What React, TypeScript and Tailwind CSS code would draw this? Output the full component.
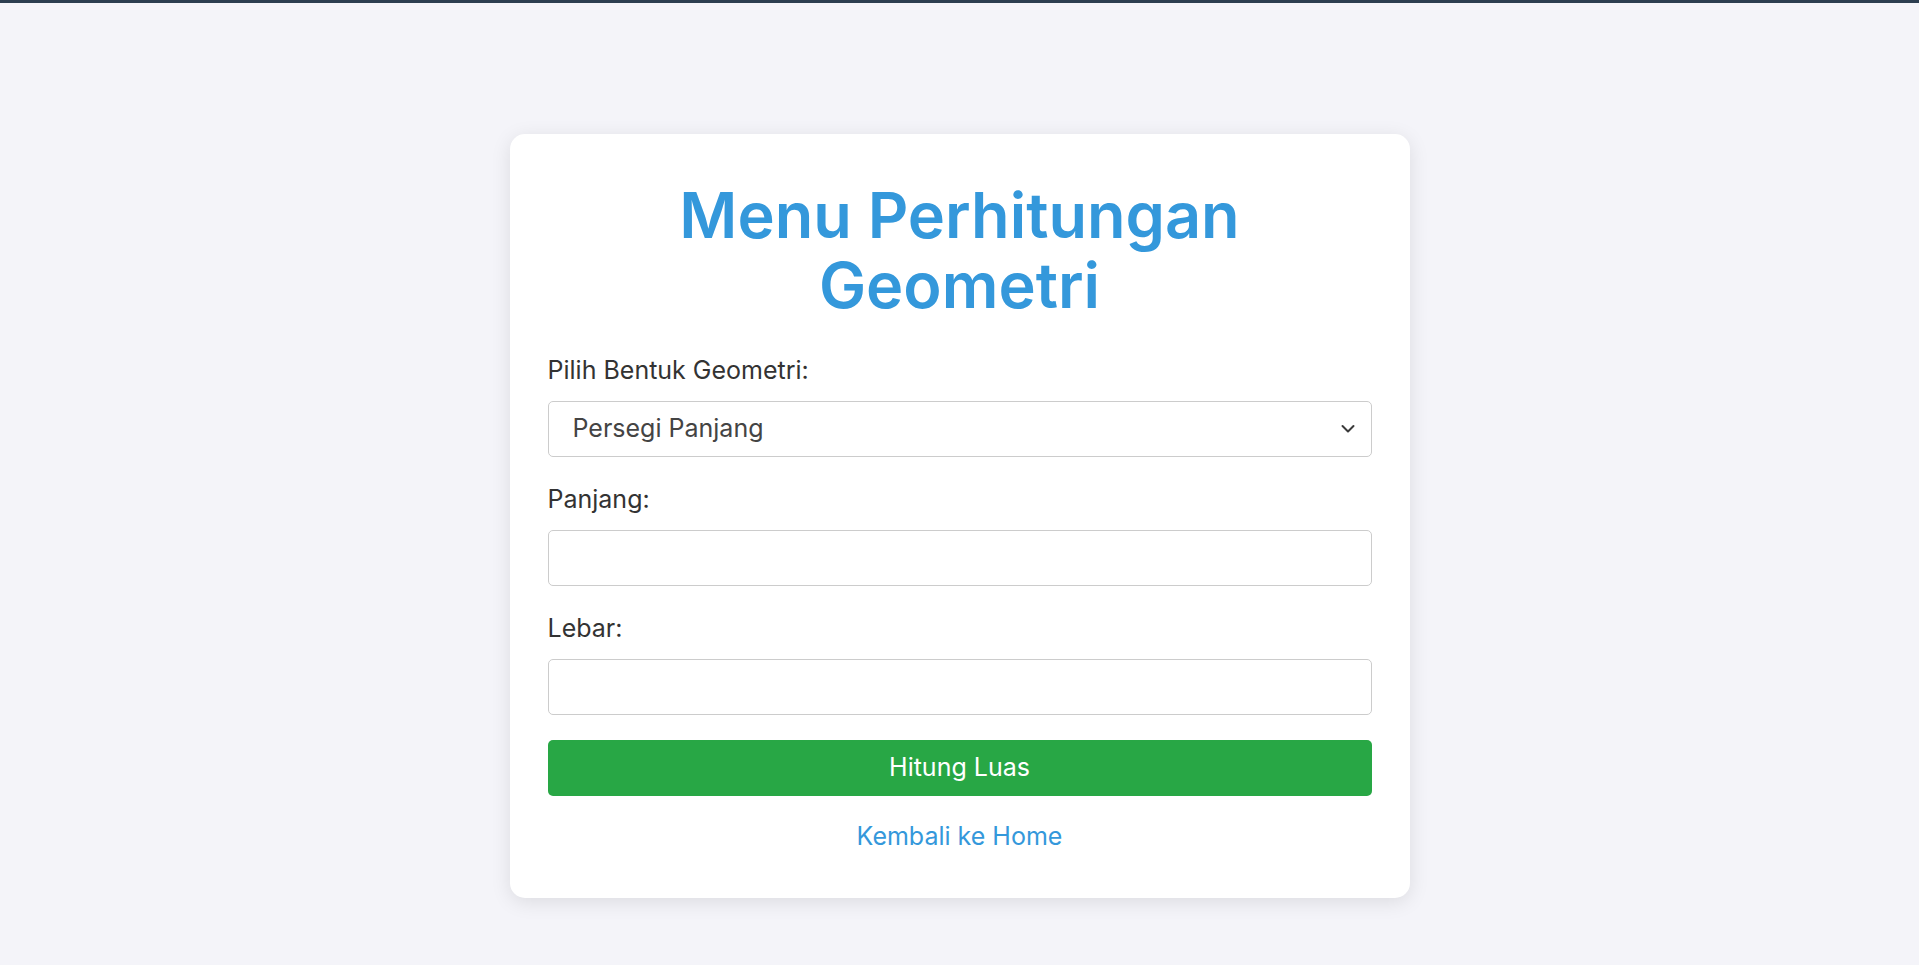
import { useState } from 'react'

const fieldClass =
  'block w-full h-[56px] rounded-[5px] border border-[#ccc] bg-white px-[24px] text-[25px] text-[#444] outline-none'

function ChevronDown() {
  return (
    <svg
      className="pointer-events-none absolute right-[5px] top-1/2 -translate-y-1/2"
      width="14"
      height="9"
      viewBox="0 0 14 9"
      fill="none"
    >
      <path d="M1.5 1.5L7 7L12.5 1.5" stroke="#3a3a3a" strokeWidth="2" strokeLinecap="round" strokeLinejoin="round" />
    </svg>
  )
}

export default function App() {
  const [shape, setShape] = useState('persegi-panjang')
  const [panjang, setPanjang] = useState('')
  const [lebar, setLebar] = useState('')

  return (
    <div className="min-h-screen border-t-[3px] border-[#2c3e50] bg-[#f4f4f9] font-['Inter',sans-serif]">
      <div className="mx-auto mt-[131px] w-[900px] rounded-[15px] bg-white px-[38px] pt-[46px] pb-[44px] shadow-[0_4px_20px_rgba(0,0,0,0.1)]">
        <h1 className="text-center text-[63px] leading-[70px] font-semibold text-[#3498db]">
          Menu Perhitungan
          <br />
          Geometri
        </h1>

        <form className="mt-[32px]" onSubmit={(e) => e.preventDefault()}>
          <label className="mb-[13px] block text-[25px] leading-[36px] text-[#333]">Pilih Bentuk Geometri:</label>
          <div className="relative">
            <select
              value={shape}
              onChange={(e) => setShape(e.target.value)}
              className={fieldClass + ' appearance-none pr-[40px]'}
            >
              <option value="persegi-panjang">Persegi Panjang</option>
              <option value="persegi">Persegi</option>
              <option value="segitiga">Segitiga</option>
              <option value="lingkaran">Lingkaran</option>
            </select>
            <span className="pointer-events-none absolute right-[12px] top-0 h-full w-[14px]">
              <ChevronDown />
            </span>
          </div>

          <label className="mt-[24px] mb-[13px] block text-[25px] leading-[36px] text-[#333]">Panjang:</label>
          <input
            type="number"
            value={panjang}
            onChange={(e) => setPanjang(e.target.value)}
            className={fieldClass}
          />

          <label className="mt-[24px] mb-[13px] block text-[25px] leading-[36px] text-[#333]">Lebar:</label>
          <input
            type="number"
            value={lebar}
            onChange={(e) => setLebar(e.target.value)}
            className={fieldClass}
          />

          <button
            type="submit"
            className="mt-[25px] block h-[56px] w-full rounded-[5px] bg-[#28a745] text-[25px] text-white"
          >
            Hitung Luas
          </button>
        </form>

        <div className="mt-[22px] text-center text-[25px] leading-[36px]">
          <a href="#" className="text-[#3498db]">
            Kembali ke Home
          </a>
        </div>
      </div>
    </div>
  )
}
